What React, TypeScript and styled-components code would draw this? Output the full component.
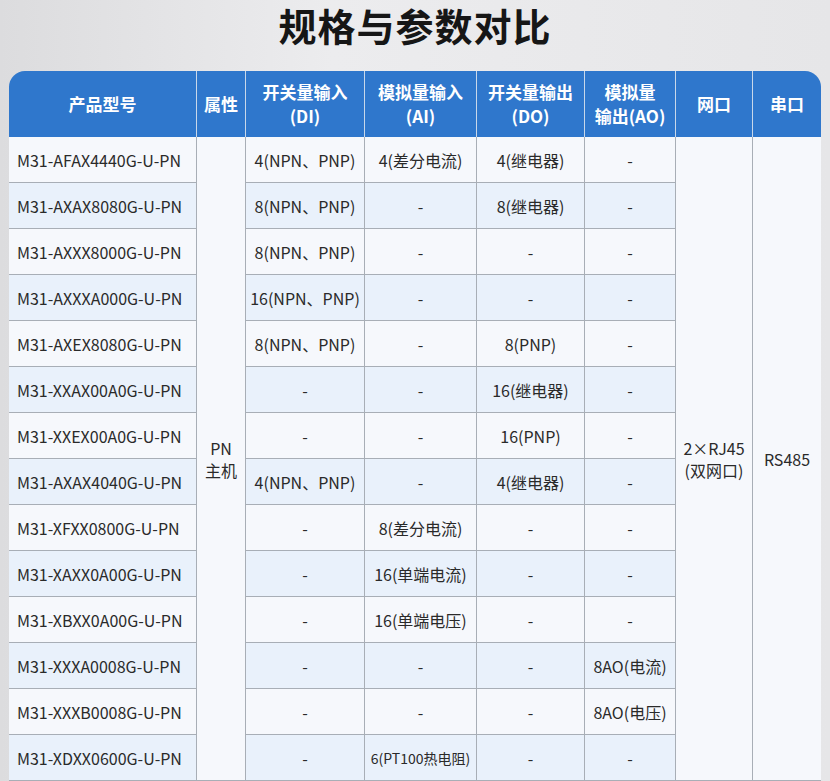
import styled, { createGlobalStyle } from "styled-components"

const Global = createGlobalStyle`
    body { margin: 0; font-family: "Noto Sans CJK SC", "Noto Sans", sans-serif; }
`
const Page = styled.div`
    width: 830px;
    height: 781px;
    overflow: hidden;
    background: linear-gradient(90deg, #dcdcde 0%, #ececee 40%, #e6e6e8 100%);
    display: flex;
    flex-direction: column;
    align-items: center;
`
const Title = styled.h1`
    margin: 0;
    height: 78px;
    padding-top: 2px;
    box-sizing: border-box;
    line-height: 46px;
    font-size: 38px;
    font-weight: 700;
    color: #161616;
    letter-spacing: 1px;
`
const Table = styled.table`
    width: 805px;
    border-collapse: separate;
    border-spacing: 0;
    table-layout: fixed;
`
const Th = styled.th<{ $w: number; $first?: boolean; $last?: boolean }>`
    width: ${p => p.$w}px;
    height: 66px;
    background: #2f77cc;
    color: #fff;
    font-size: 17px;
    font-weight: 700;
    line-height: 24px;
    border-left: ${p => (p.$first ? "none" : "1px solid #c9d8ea")};
    border-top-left-radius: ${p => (p.$first ? "16px" : "0")};
    border-top-right-radius: ${p => (p.$last ? "16px" : "0")};
    padding: 0;
`
const Td = styled.td<{ $alt?: boolean; $left?: boolean }>`
    height: 45px;
    padding: 0;
    background: ${p => (p.$alt ? "#e9f1fb" : "#f6f8fc")};
    border-left: 1px solid #a8aeb6;
    border-bottom: 1px solid #a8aeb6;
    color: #2a2a2a;
    font-size: 16px;
    text-align: ${p => (p.$left ? "left" : "center")};
    padding-left: ${p => (p.$left ? "8px" : "0")};
    white-space: nowrap;
    line-height: 22px;
`
const Sm = styled.span`
    font-size: 14px;
`

const rows: string[][] = [
    ["M31-AFAX4440G-U-PN", "4(NPN、PNP)", "4(差分电流)", "4(继电器)", "-"],
    ["M31-AXAX8080G-U-PN", "8(NPN、PNP)", "-", "8(继电器)", "-"],
    ["M31-AXXX8000G-U-PN", "8(NPN、PNP)", "-", "-", "-"],
    ["M31-AXXXA000G-U-PN", "16(NPN、PNP)", "-", "-", "-"],
    ["M31-AXEX8080G-U-PN", "8(NPN、PNP)", "-", "8(PNP)", "-"],
    ["M31-XXAX00A0G-U-PN", "-", "-", "16(继电器)", "-"],
    ["M31-XXEX00A0G-U-PN", "-", "-", "16(PNP)", "-"],
    ["M31-AXAX4040G-U-PN", "4(NPN、PNP)", "-", "4(继电器)", "-"],
    ["M31-XFXX0800G-U-PN", "-", "8(差分电流)", "-", "-"],
    ["M31-XAXX0A00G-U-PN", "-", "16(单端电流)", "-", "-"],
    ["M31-XBXX0A00G-U-PN", "-", "16(单端电压)", "-", "-"],
    ["M31-XXXA0008G-U-PN", "-", "-", "-", "8AO(电流)"],
    ["M31-XXXB0008G-U-PN", "-", "-", "-", "8AO(电压)"],
    ["M31-XDXX0600G-U-PN", "-", "6(PT100热电阻)", "-", "-"],
]

export default function App() {
    return (
        <Page>
            <Global />
            <Title>规格与参数对比</Title>
            <Table>
                <thead>
                    <tr>
                        <Th $w={187} $first>产品型号</Th>
                        <Th $w={48}>属性</Th>
                        <Th $w={118}>开关量输入<br />(DI)</Th>
                        <Th $w={111}>模拟量输入<br />(AI)</Th>
                        <Th $w={107}>开关量输出<br />(DO)</Th>
                        <Th $w={90}>模拟量<br />输出(AO)</Th>
                        <Th $w={76}>网口</Th>
                        <Th $w={68} $last>串口</Th>
                    </tr>
                </thead>
                <tbody>
                    {rows.map((r, i) => {
                        const alt = i % 2 === 1
                        return (
                            <tr key={r[0]}>
                                <Td $alt={alt} $left style={{ borderLeft: "none" }}>{r[0]}</Td>
                                {i === 0 && <Td rowSpan={14}>PN<br />主机</Td>}
                                <Td $alt={alt}>{r[1]}</Td>
                                <Td $alt={alt}>{r[2].includes("PT100") ? <Sm>{r[2]}</Sm> : r[2]}</Td>
                                <Td $alt={alt}>{r[3]}</Td>
                                <Td $alt={alt}>{r[4]}</Td>
                                {i === 0 && <Td rowSpan={14}>2×RJ45<br />(双网口)</Td>}
                                {i === 0 && <Td rowSpan={14}>RS485</Td>}
                            </tr>
                        )
                    })}
                </tbody>
            </Table>
        </Page>
    )
}
